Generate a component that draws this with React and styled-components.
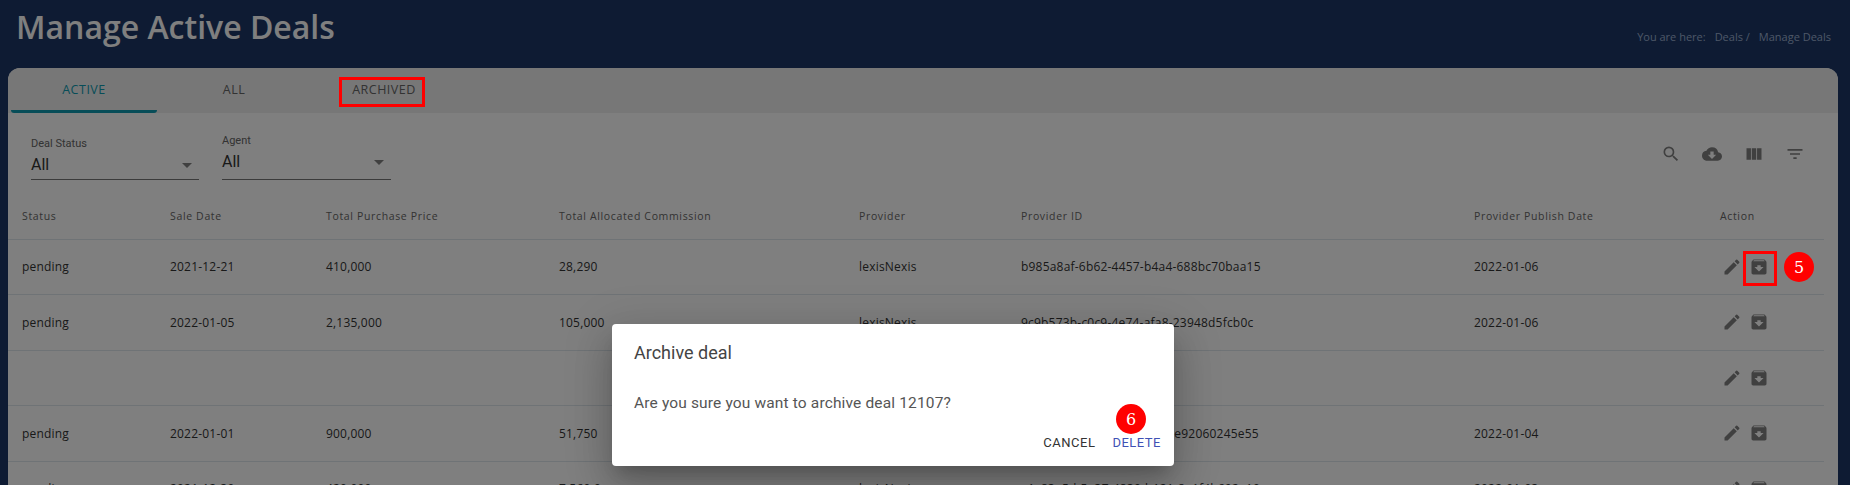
import React from "react";
import styled, { createGlobalStyle } from "styled-components";
import { MdSearch, MdCloudDownload, MdViewColumn, MdFilterList, MdEdit, MdArchive, MdArrowDropDown } from "react-icons/md";

const GlobalStyle = createGlobalStyle`
  html, body { margin: 0; padding: 0; height: 100%; overflow: hidden; background: #1c3766; }
  body { font-family: "Open Sans", sans-serif; }
`;

const columns = [
  { name: "Status", width: 148 },
  { name: "Sale Date", width: 156 },
  { name: "Total Purchase Price", width: 233 },
  { name: "Total Allocated Commission", width: 300 },
  { name: "Provider", width: 162 },
  { name: "Provider ID", width: 453 },
  { name: "Provider Publish Date", width: 246 },
  { name: "Action", width: 118 },
];

const rows = [
  ["pending", "2021-12-21", "410,000", "28,290", "lexisNexis", "b985a8af-6b62-4457-b4a4-688bc70baa15", "2022-01-06"],
  ["pending", "2022-01-05", "2,135,000", "105,000", "lexisNexis", "9c9b573b-c0c9-4e74-afa8-23948d5fcb0c", "2022-01-06"],
  ["", "", "", "", "", "", ""],
  ["pending", "2022-01-01", "900,000", "51,750", "lexisNexis", "c0a3cd41-7b1e-4f6a-9d20-e92060245e55", "2022-01-04"],
  ["pending", "2021-12-30", "420,000", "7,560.0", "lexisNexis", "a1c83e5d-5e37-4839-b121-8e1f4b692a10", "2022-01-03"],
];

const App = () => (
  <Page>
    <GlobalStyle />
    <Header>
      <Title>Manage Active Deals</Title>
      <Breadcrumb>
        <span>You are here:</span>
        <span>Deals /</span>
        <span>Manage Deals</span>
      </Breadcrumb>
    </Header>
    <Panel>
      <Tabs>
        <Tab $active>ACTIVE</Tab>
        <Tab>ALL</Tab>
        <Tab>ARCHIVED</Tab>
      </Tabs>
      <Toolbar>
        <Filters>
          <Select $width={168}>
            <SelectLabel>Deal Status</SelectLabel>
            <SelectValue>
              All
              <MdArrowDropDown size={24} />
            </SelectValue>
          </Select>
          <Select $width={169} $raised>
            <SelectLabel>Agent</SelectLabel>
            <SelectValue>
              All
              <MdArrowDropDown size={24} />
            </SelectValue>
          </Select>
        </Filters>
        <ToolIcons>
          <ToolButton><MdSearch size={20} /></ToolButton>
          <ToolButton><MdCloudDownload size={20} /></ToolButton>
          <ToolButton><MdViewColumn size={20} /></ToolButton>
          <ToolButton><MdFilterList size={20} /></ToolButton>
        </ToolIcons>
      </Toolbar>
      <Table>
        <thead>
          <tr>
            {columns.map((c) => (
              <HeadCell key={c.name} style={{ width: c.width }}>{c.name}</HeadCell>
            ))}
          </tr>
        </thead>
        <tbody>
          {rows.map((row, i) => (
            <tr key={i}>
              {row.map((value, j) => (
                <Cell key={j}>{value}</Cell>
              ))}
              <Cell>
                <Actions>
                  <MdEdit size={20} />
                  <MdArchive size={20} />
                </Actions>
              </Cell>
            </tr>
          ))}
        </tbody>
      </Table>
    </Panel>
    <Backdrop />
    <Dialog>
      <DialogTitle>Archive deal</DialogTitle>
      <DialogText>Are you sure you want to archive deal 12107?</DialogText>
      <DialogActions>
        <DialogButton>CANCEL</DialogButton>
        <DialogButton $primary>DELETE</DialogButton>
      </DialogActions>
    </Dialog>
    <MarkBox $left={339} $top={77} $width={86} $height={30} />
    <MarkBox $left={1743} $top={251} $width={34} $height={35} />
    <Badge $left={1784} $top={252}>5</Badge>
    <Badge $left={1116} $top={404}>6</Badge>
  </Page>
);

export default App;

const Page = styled.div`
  position: relative;
  height: 485px;
  overflow: hidden;
`;

const Header = styled.header`
  height: 68px;
  padding: 0 19px 0 16px;
  display: flex;
  justify-content: space-between;
  align-items: flex-start;
`;

const Title = styled.h1`
  margin: 6px 0 0;
  font-size: 32px;
  line-height: 42px;
  font-weight: 600;
  color: #fff;
`;

const Breadcrumb = styled.div`
  margin-top: 29px;
  display: flex;
  gap: 9px;
  font-size: 11px;
  line-height: 16px;
  color: #9aaecf;
`;

const Panel = styled.main`
  margin: 0 12px 0 8px;
  height: 600px;
  background: #fff;
  border-radius: 12px 12px 0 0;
  overflow: hidden;
`;

const Tabs = styled.nav`
  height: 45px;
  padding-left: 3px;
  display: flex;
  background: #eee;
`;

const Tab = styled.div`
  width: 146px;
  margin-right: 4px;
  display: flex;
  align-items: center;
  justify-content: center;
  font-size: 12.5px;
  letter-spacing: 0.5px;
  color: ${(p) => (p.$active ? "#0f9bb0" : "#666")};
  border-bottom: 3px solid ${(p) => (p.$active ? "#0f9bb0" : "transparent")};
  border-radius: 0 0 3px 3px;
`;

const Toolbar = styled.div`
  height: 75px;
  padding: 0 22px 0 23px;
  display: flex;
  justify-content: space-between;
`;

const Filters = styled.div`
  display: flex;
  gap: 23px;
`;

const Select = styled.div`
  width: ${(p) => p.$width}px;
  height: 67px;
  box-sizing: border-box;
  padding-top: ${(p) => (p.$raised ? 21 : 24)}px;
  border-bottom: 1px solid #777;
  font-family: Roboto, sans-serif;
`;

const SelectLabel = styled.div`
  font-size: 11px;
  line-height: 13px;
  color: #666;
`;

const SelectValue = styled.div`
  margin-top: 3px;
  display: flex;
  justify-content: space-between;
  align-items: center;
  font-size: 16px;
  line-height: 20px;
  color: #333;
  svg { color: #808080; }
`;

const ToolIcons = styled.div`
  display: flex;
  margin-top: 31px;
`;

const ToolButton = styled.div`
  width: 41.5px;
  height: 20px;
  display: flex;
  justify-content: center;
  color: #808080;
`;

const Table = styled.table`
  width: 1816px;
  border-collapse: collapse;
  table-layout: fixed;
`;

const HeadCell = styled.th`
  height: 51px;
  padding: 6px 0 0 14px;
  box-sizing: border-box;
  text-align: left;
  font-size: 10.5px;
  font-weight: 400;
  letter-spacing: 0.65px;
  color: #666;
  border-bottom: 1px solid #dfe7ec;
`;

const Cell = styled.td`
  height: 55.5px;
  padding: 0 0 0 14px;
  box-sizing: border-box;
  font-size: 12px;
  letter-spacing: 0.2px;
  color: #333;
  border-bottom: 1px solid #dfe7ec;
`;

const Actions = styled.div`
  display: flex;
  gap: 7px;
  padding-left: 2px;
  color: #808080;
`;

const Backdrop = styled.div`
  position: absolute;
  inset: 0;
  background: rgba(0, 0, 0, 0.5);
`;

const Dialog = styled.section`
  position: absolute;
  left: 612px;
  top: 324px;
  width: 562px;
  height: 142px;
  box-sizing: border-box;
  padding: 0 13px 0 22px;
  background: #fff;
  border-radius: 4px;
  box-shadow: 0 11px 15px -7px rgba(0, 0, 0, 0.2), 0 24px 38px 3px rgba(0, 0, 0, 0.14), 0 9px 46px 8px rgba(0, 0, 0, 0.12);
  font-family: Roboto, sans-serif;
`;

const DialogTitle = styled.h2`
  margin: 17px 0 0;
  font-size: 18px;
  line-height: 24px;
  font-weight: 400;
  color: #444;
`;

const DialogText = styled.p`
  margin: 28px 0 0;
  font-size: 15.5px;
  line-height: 20px;
  letter-spacing: 0.15px;
  color: #555;
`;

const DialogActions = styled.div`
  margin-top: 22px;
  display: flex;
  justify-content: flex-end;
  gap: 17px;
`;

const DialogButton = styled.span`
  font-size: 13px;
  line-height: 16px;
  letter-spacing: 0.5px;
  color: ${(p) => (p.$primary ? "#3f51b5" : "#333")};
`;

const MarkBox = styled.div`
  position: absolute;
  left: ${(p) => p.$left}px;
  top: ${(p) => p.$top}px;
  width: ${(p) => p.$width}px;
  height: ${(p) => p.$height}px;
  box-sizing: border-box;
  border: 3px solid #f00;
`;

const Badge = styled.div`
  position: absolute;
  left: ${(p) => p.$left}px;
  top: ${(p) => p.$top}px;
  width: 30px;
  height: 30px;
  border-radius: 50%;
  background: #f00;
  color: #fff;
  display: flex;
  align-items: center;
  justify-content: center;
  font-family: "DejaVu Serif", serif;
  font-size: 16px;
`;
